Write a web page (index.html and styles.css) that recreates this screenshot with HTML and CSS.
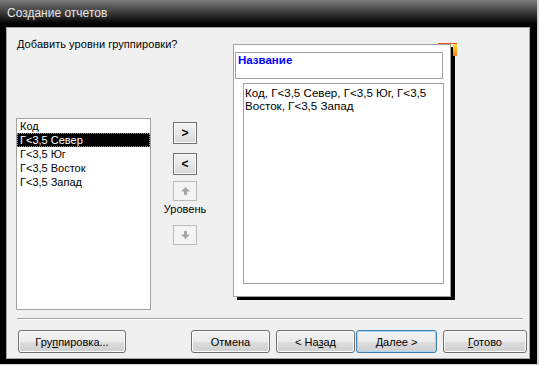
FILE: index.html
```html
<!DOCTYPE html>
<html lang="ru">
  <head>
    <meta http-equiv="Content-Type" content="text/html; charset=utf-8" />
    <title>Создание отчетов</title>
    <link rel="stylesheet" href="styles.css">
  </head>
  <body>
    <div class="window">
      <div class="titlebar">Создание отчетов</div>
      <div class="client">
        <div class="main">
          <div class="left">
            <div class="question">Добавить уровни группировки?</div>
            <div class="picker">
              <ul class="fields">
                <li>Код</li>
                <li class="selected">Г&lt;3,5 Север</li>
                <li>Г&lt;3,5 Юг</li>
                <li>Г&lt;3,5 Восток</li>
                <li>Г&lt;3,5 Запад</li>
              </ul>
              <div class="controls">
                <button type="button" class="small-btn add">&gt;</button>
                <button type="button" class="small-btn remove">&lt;</button>
                <button type="button" class="small-btn off up">
                  <svg width="9" height="8" viewBox="0 0 9 8">
                    <path d="M4.5 0 L9 4.5 L6 4.5 L6 8 L3 8 L3 4.5 L0 4.5 Z" fill="#a6a6a6" />
                  </svg>
                </button>
                <span class="level">Уровень</span>
                <button type="button" class="small-btn off down">
                  <svg width="9" height="8" viewBox="0 0 9 8">
                    <path d="M4.5 8 L9 3.5 L6 3.5 L6 0 L3 0 L3 3.5 L0 3.5 Z" fill="#a6a6a6" />
                  </svg>
                </button>
              </div>
            </div>
          </div>
          <div class="page">
            <div class="title-box">Название</div>
            <div class="body-box">Код, Г&lt;3,5 Север, Г&lt;3,5 Юг, Г&lt;3,5 Восток, Г&lt;3,5 Запад</div>
            <div class="corner"></div>
          </div>
        </div>
        <div class="separator"></div>
        <div class="actions">
          <button type="button" class="btn grouping">Гру<u>п</u>пировка...</button>
          <button type="button" class="btn cancel">Отмена</button>
          <button type="button" class="btn back">&lt; На<u>з</u>ад</button>
          <button type="button" class="btn next focused"><u>Д</u>алее &gt;</button>
          <button type="button" class="btn done"><u>Г</u>отово</button>
        </div>
      </div>
    </div>
  </body>
</html>
```

FILE: styles.css
```css
body {
  margin: 0;
  padding: 0;
  background-color: #d6d6d6;
  font-family: "Liberation Sans", Arial, sans-serif;
  font-size: 11px;
  color: #000;
}
.window {
  width: 537px;
  height: 364px;
  box-sizing: border-box;
  background-color: #000;
  display: flex;
  flex-direction: column;
}
.titlebar {
  height: 27px;
  box-sizing: border-box;
  padding-left: 7px;
  line-height: 26px;
  font-size: 12px;
  color: #e6e6e6;
  text-shadow: 0 0 6px #555;
  background: linear-gradient(#7c7c7c, #3c3c3c 45%, #050505 85%, #000);
}
.client {
  flex: 1;
  margin: 0 7px 5px 6px;
  border: 1px solid #a5a5a5;
  background-color: #f0f0f0;
  display: flex;
  flex-direction: column;
}
.main {
  height: 290px;
  display: flex;
  align-items: flex-start;
}
.left {
  width: 217px;
  padding-left: 9px;
}
.question {
  margin: 10px 0 0 1px;
  line-height: 13px;
  letter-spacing: 0.05px;
}
.picker {
  margin-top: 67px;
  display: flex;
  align-items: flex-start;
}
.fields {
  list-style: none;
  margin: 0;
  padding: 0;
  width: 135px;
  height: 192px;
  box-sizing: border-box;
  border: 1px solid #a0a0a0;
  background-color: #fff;
}
.fields li {
  height: 14px;
  line-height: 14px;
  padding-left: 3px;
  white-space: nowrap;
}
.fields li.selected {
  background-color: #000;
  color: #fff;
  outline: 1px dotted #9a9a9a;
  outline-offset: -1px;
}
.controls {
  width: 56px;
  margin-left: 6px;
  margin-top: 4px;
  display: flex;
  flex-direction: column;
  align-items: center;
}
.small-btn {
  width: 24px;
  height: 22px;
  margin: 0;
  padding: 0;
  box-sizing: border-box;
  border: 1px solid #707070;
  border-radius: 0;
  background: linear-gradient(#f4f4f4, #e6e6e6 50%, #d6d6d6);
  box-shadow: inset 0 0 0 1px #fbfbfb;
  font-family: "Liberation Sans", Arial, sans-serif;
  font-size: 12px;
  font-weight: bold;
  line-height: 18px;
  color: #000;
  display: flex;
  align-items: center;
  justify-content: center;
}
.add {
  margin-bottom: 9px;
}
.remove {
  margin-bottom: 6px;
}
.small-btn.off {
  height: 20px;
  border-color: #bcbcbc;
  background: #f4f4f4;
  box-shadow: none;
}
.level {
  margin-top: 2px;
  line-height: 13px;
}
.down {
  margin-top: 9px;
}
.page {
  position: relative;
  margin-top: 16px;
  width: 218px;
  height: 253px;
  box-sizing: border-box;
  border: 1px solid #a0a0a0;
  background-color: #fff;
  box-shadow: 4px 3px 0 #000;
}
.title-box {
  margin: 7px 0 0 1px;
  width: 208px;
  height: 27px;
  box-sizing: border-box;
  border: 1px solid #a0a0a0;
  padding: 1px 0 0 2px;
  color: #0000ff;
  font-weight: bold;
  font-size: 11.5px;
  line-height: 13px;
}
.body-box {
  margin: 4px 0 0 9px;
  width: 201px;
  height: 201px;
  box-sizing: border-box;
  border: 1px solid #a0a0a0;
  padding: 2px 0 0 1px;
  font-size: 11.6px;
  line-height: 13px;
}
.corner {
  position: absolute;
  top: -2px;
  right: -7px;
  width: 19px;
  height: 12px;
  border-top: 1px solid #f0561c;
}
.corner::after {
  content: "";
  position: absolute;
  top: 0;
  right: 0;
  width: 4px;
  height: 12px;
  background: linear-gradient(#ffd83a, #ffb020 55%, #f07a18);
}
.separator {
  margin: 0 6px 0 10px;
  border-top: 1px solid #a0a0a0;
  border-bottom: 1px solid #fff;
}
.actions {
  margin-top: 10px;
  padding-left: 11px;
  display: flex;
}
.btn {
  height: 23px;
  margin: 0;
  padding: 0;
  box-sizing: border-box;
  border: 1px solid #707070;
  border-radius: 3px;
  background: linear-gradient(#f2f2f2, #ebebeb 50%, #dddddd 51%, #cfcfcf);
  box-shadow: inset 0 0 0 1px #fcfcfc;
  font-family: "Liberation Sans", Arial, sans-serif;
  font-size: 11px;
  color: #000;
}
.grouping {
  width: 108px;
}
.cancel {
  width: 79px;
  margin-left: 65px;
}
.back {
  width: 79px;
  margin-left: 6px;
}
.next {
  width: 81px;
  margin-left: 1px;
}
.done {
  width: 84px;
  margin-left: 6px;
}
.btn.focused {
  border-color: #3c7fb1;
  box-shadow: inset 0 0 0 1px #a8d8f6;
}
```
